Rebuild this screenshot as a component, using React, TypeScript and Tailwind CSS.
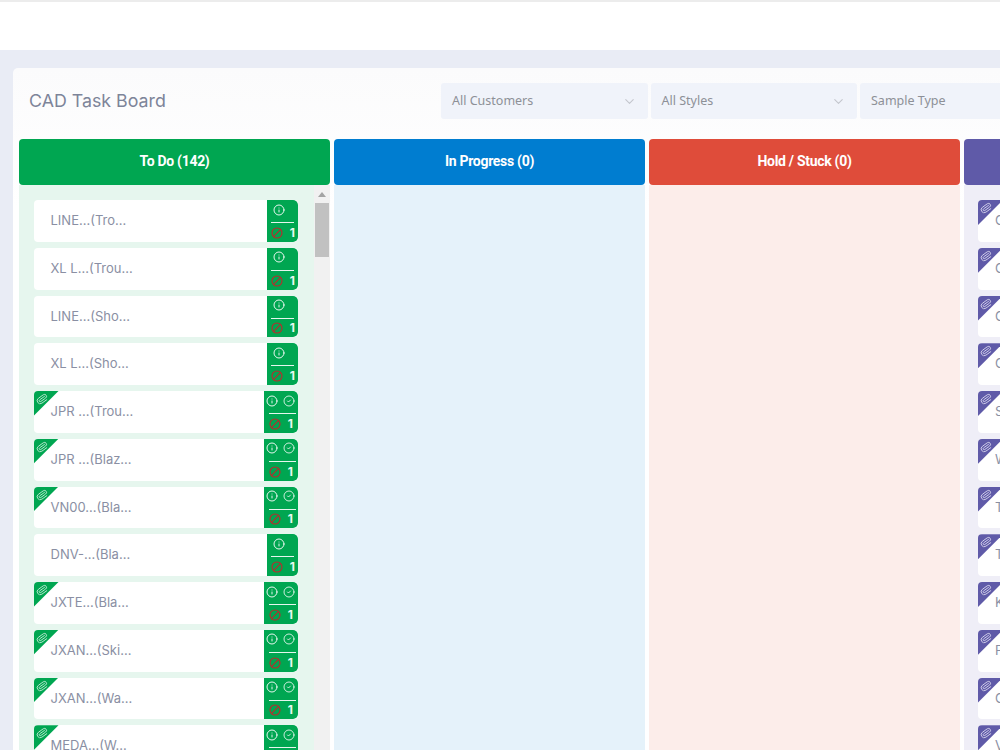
import { Ban, ChevronDown, CircleCheck, Info, Paperclip } from 'lucide-react'

type Task = { name: string; attached?: boolean }

const todo: Task[] = [
  { name: 'LINE...(Tro...' },
  { name: 'XL L...(Trou...' },
  { name: 'LINE...(Sho...' },
  { name: 'XL L...(Sho...' },
  { name: 'JPR ...(Trou...', attached: true },
  { name: 'JPR ...(Blaz...', attached: true },
  { name: 'VN00...(Bla...', attached: true },
  { name: 'DNV-...(Bla...' },
  { name: 'JXTE...(Bla...', attached: true },
  { name: 'JXAN...(Ski...', attached: true },
  { name: 'JXAN...(Wa...', attached: true },
  { name: 'MEDA...(W...', attached: true }
]

const review = ['C', 'C', 'C', 'C', 'S', 'W', 'T', 'T', 'K', 'P', 'C', 'V']

function TodoCard({ name, attached }: Task) {
  return (
    <div className="relative flex h-[41.75px] shrink-0 overflow-hidden rounded-[4px] bg-white">
      {attached && (
        <div className="absolute left-0 top-0 h-[25px] w-[25px] bg-[#00a651] [clip-path:polygon(0_0,100%_0,0_100%)]">
          <Paperclip className="ml-[2px] mt-[2px] h-[12px] w-[12px] rotate-[10deg] text-[#bfe8d3]" strokeWidth={1.75} />
        </div>
      )}
      <div className="flex-1 truncate pl-[17px] text-[13px] leading-[40px] text-[#8a8fa3]">{name}</div>
      <div className={`flex flex-col rounded-r-[5px] bg-[#00a651] ${attached ? 'w-[34px]' : 'w-[31px]'}`}>
        <div className={`flex h-[19px] shrink-0 items-center ${attached ? 'gap-[5px] pl-[2px]' : 'pl-[6px]'}`}>
          <Info className="h-[12px] w-[12px] text-white/90" strokeWidth={2} />
          {attached && <CircleCheck className="h-[12px] w-[12px] text-white/90" strokeWidth={1.75} />}
        </div>
        <div className={`mt-[3px] h-px shrink-0 bg-white/90 ${attached ? 'ml-[5px] mr-[2px]' : 'ml-[4px] mr-[4px]'}`} />
        <div className={`flex flex-1 items-center justify-between pt-[1px] ${attached ? 'pl-[5px] pr-[5px]' : 'pl-[4px] pr-[3px]'}`}>
          <Ban className="h-[12px] w-[12px] -scale-x-100 text-[#bb2a2c]" strokeWidth={2.25} />
          <span className="text-[12px] font-bold leading-none text-[#e8f8f0]">1</span>
        </div>
      </div>
    </div>
  )
}

function ReviewCard({ name }: { name: string }) {
  return (
    <div className="relative h-[41.75px] shrink-0 overflow-hidden rounded-[4px] bg-white">
      <div className="absolute left-0 top-0 h-[25px] w-[25px] bg-[#5f5aa8] [clip-path:polygon(0_0,100%_0,0_100%)]">
        <Paperclip className="ml-[2px] mt-[2px] h-[12px] w-[12px] rotate-[10deg] text-[#d5d3ec]" strokeWidth={1.75} />
      </div>
      <div className="pl-[17px] text-[13px] leading-[40px] text-[#8a8fa3]">{name}</div>
    </div>
  )
}

function Filter({ label, arrow = true }: { label: string; arrow?: boolean }) {
  return (
    <div className="flex h-[36px] w-[206.5px] shrink-0 items-center justify-between rounded-[3px] bg-[#f0f3fa] pl-[11px] pr-[11px] pt-[1px] font-['Noto_Sans',sans-serif] text-[12.5px] text-[#8d9097]">
      {label}
      {arrow && <ChevronDown className="h-[15px] w-[15px] text-[#c3c6cd]" strokeWidth={1.75} />}
    </div>
  )
}

function ColumnHead({ title, color }: { title: string; color: string }) {
  return (
    <div className={`flex h-[46px] shrink-0 items-center justify-center rounded-[4px] pb-[1px] font-['Roboto',sans-serif] text-[14px] font-bold tracking-[-0.3px] text-white ${color}`}>
      {title}
    </div>
  )
}

export default function App() {
  return (
    <div className="flex h-[750px] w-[1000px] flex-col overflow-hidden bg-[#e9ecf5] font-['Inter',sans-serif]">
      <header className="h-[50px] shrink-0 border-t-2 border-[#ececec] bg-white" />

      <main className="ml-[13px] mt-[18px] flex w-[1300px] flex-1 flex-col rounded-t-[5px] bg-gradient-to-b from-[#fbfbfc] to-white to-20%">
        <div className="flex h-[71px] shrink-0 items-center pb-[5px]">
          <h1 className="w-[428px] shrink-0 pl-[16px] text-[17.8px] font-normal text-[#7d8499]">CAD Task Board</h1>
          <div className="flex gap-[3px]">
            <Filter label="All Customers" />
            <Filter label="All Styles" />
            <Filter label="Sample Type" arrow={false} />
          </div>
        </div>

        <div className="ml-[6px] flex flex-1 gap-[4px] overflow-hidden">
          <section className="flex w-[311px] shrink-0 flex-col">
            <ColumnHead title="To Do (142)" color="bg-[#00a651]" />
            <div className="flex flex-1 overflow-hidden bg-[#e6f6ee]">
              <div className="flex flex-1 flex-col gap-[6px] pl-[14.5px] pr-[16px] pt-[15px]">
                {todo.map((t) => (
                  <TodoCard key={t.name} {...t} />
                ))}
              </div>
              <div className="flex w-[16px] shrink-0 flex-col items-center bg-[#f1f1f1]">
                <div className="mt-[7px] h-0 w-0 border-x-[4px] border-b-[5px] border-x-transparent border-b-[#a3a3a3]" />
                <div className="mt-[6px] h-[54px] w-[14px] bg-[#c1c1c1]" />
              </div>
            </div>
          </section>

          <section className="flex w-[311px] shrink-0 flex-col">
            <ColumnHead title="In Progress (0)" color="bg-[#007dd0]" />
            <div className="flex-1 bg-[#e5f2fa]" />
          </section>

          <section className="flex w-[311px] shrink-0 flex-col">
            <ColumnHead title="Hold / Stuck (0)" color="bg-[#df4c3a]" />
            <div className="flex-1 bg-[#fcedea]" />
          </section>

          <section className="flex w-[311px] shrink-0 flex-col">
            <ColumnHead title="" color="bg-[#5f5aa8]" />
            <div className="flex flex-1 flex-col gap-[6px] overflow-hidden bg-[#efeef7] pl-[14px] pr-[16px] pt-[15px]">
              {review.map((r, i) => (
                <ReviewCard key={i} name={r} />
              ))}
            </div>
          </section>
        </div>
      </main>
    </div>
  )
}
